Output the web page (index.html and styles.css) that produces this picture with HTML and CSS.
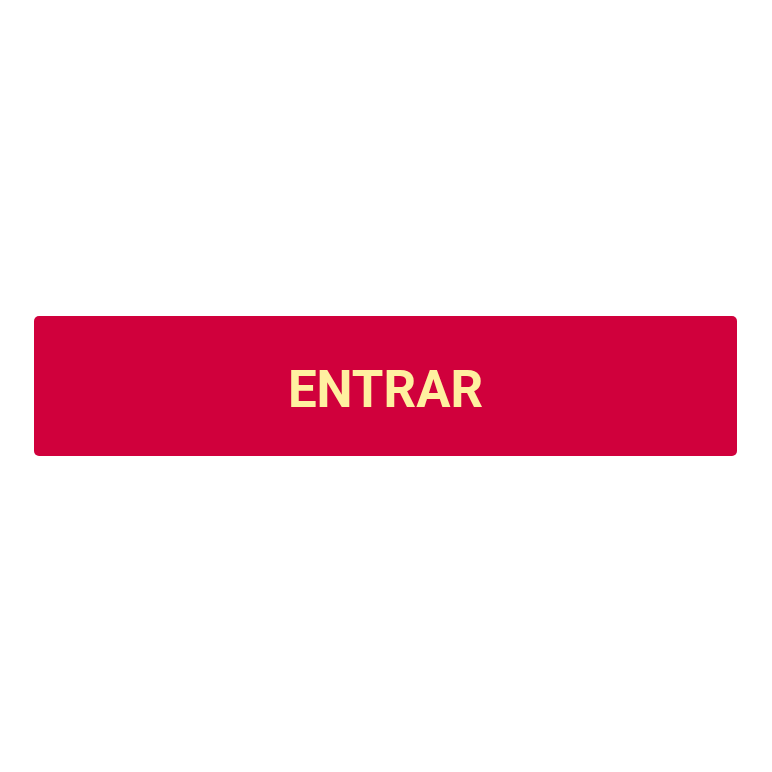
FILE: index.html
```html
<!DOCTYPE html>
<html lang="pt">
<head>
<meta charset="utf-8">
<title>Entrar</title>
<link rel="stylesheet" href="styles.css">
</head>
<body>
<main class="page">
  <button class="btn-enter" type="button">ENTRAR</button>
</main>
</body>
</html>
```
FILE: styles.css
```css
html, body {
  margin: 0;
  padding: 0;
  background: #ffffff;
}
.page {
  box-sizing: border-box;
  height: 772px;
  padding: 0 35px 0 34px;
  display: flex;
  align-items: center;
}
.btn-enter {
  flex: 1;
  height: 140px;
  border: none;
  border-radius: 5px;
  background: #d0003c;
  color: #fff0a0;
  font-family: Roboto, "Liberation Sans", sans-serif;
  font-weight: 700;
  font-size: 51px;
  letter-spacing: 0;
  padding: 6px 0 0;
  cursor: pointer;
}
```
